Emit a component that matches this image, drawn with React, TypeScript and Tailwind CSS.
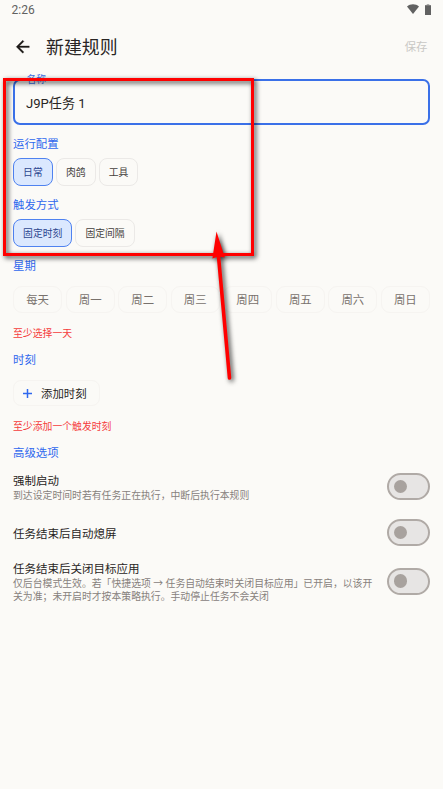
import React, { useState } from 'react';

interface ChipProps {
  label: string;
  selected?: boolean;
  onClick?: () => void;
}

interface SwitchRowProps {
  title: string;
  lines?: string[];
  className: string;
}

const profiles = ['日常', '肉鸽', '工具'];
const triggers = ['固定时刻', '固定间隔'];
const days = ['每天', '周一', '周二', '周三', '周四', '周五', '周六', '周日'];

const BackIcon: React.FC<{ className?: string }> = ({ className }) => (
  <svg className={className} viewBox="0 0 24 24" fill="currentColor" stroke="currentColor" strokeWidth="0.4">
    <path d="M20 11H7.83l5.59-5.59L12 4l-8 8 8 8 1.41-1.41L7.83 13H20v-2z" />
  </svg>
);

const WifiIcon: React.FC = () => (
  <svg className="h-[10px] w-[12px]" viewBox="0 0 12 10" fill="currentColor">
    <path d="M0 2.4C3.3-.6 8.7-.6 12 2.4L6 10z" />
  </svg>
);

const BatteryIcon: React.FC = () => (
  <svg className="h-[11px] w-[6px]" viewBox="0 0 6 11" fill="currentColor">
    <path d="M1.7 0h2.6v1.2H1.7z" opacity="0.5" />
    <path d="M0 1.2h6V11H0z" />
  </svg>
);

const Chip: React.FC<ChipProps> = ({ label, selected, onClick }) => (
  <button
    onClick={onClick}
    className={`h-[28.5px] rounded-[8px] border px-[9.1px] pt-[1.5px] text-[9.8px] leading-none whitespace-nowrap ${
      selected ? 'border-[#4f82f0] bg-[#dbe8fe] text-[#2b458f]' : 'border-[#ebe9e7] text-[#44403c]'
    }`}
  >
    {label}
  </button>
);

const SectionTitle: React.FC<{ children: React.ReactNode }> = ({ children }) => (
  <h2 className="h-4 text-[11.4px] leading-[17px] text-[#2f68ee]">{children}</h2>
);

const ErrorText: React.FC<{ children: React.ReactNode }> = ({ children }) => (
  <p className="h-3.5 text-[9.85px] leading-[16px] text-[#f53d3d]">{children}</p>
);

const SwitchRow: React.FC<SwitchRowProps> = ({ title, lines = [], className }) => {
  const [on, setOn] = useState(false);
  return (
    <div className={`flex items-center justify-between ${className}`}>
      <div className="pt-[2px]">
        <h3 className="text-[11.5px] leading-[16px] text-[#292524]">{title}</h3>
        {lines.map((line) => (
          <p key={line} className="text-[9.85px] leading-[13.2px] whitespace-nowrap text-[#87817c]">
            {line}
          </p>
        ))}
      </div>
      <button
        role="switch"
        aria-checked={on}
        aria-label={title}
        onClick={() => setOn(!on)}
        className={`flex h-[27px] w-[43px] shrink-0 items-center rounded-full border-2 border-[#b0aaa6] bg-[#e7e5e4] px-[4.5px] ${
          on ? 'justify-end' : 'justify-start'
        }`}
      >
        <span className="size-[13.5px] rounded-full bg-[#a8a29e]" />
      </button>
    </div>
  );
};

// red frame and arrow drawn on top of the form
const Annotation: React.FC = () => (
  <div className="pointer-events-none absolute inset-0">
    <svg
      className="h-full w-full drop-shadow-[2px_2px_2.5px_rgba(0,0,0,0.8)]"
      viewBox="0 0 443 789"
      fill="#ff0000"
    >
      <rect x="4.5" y="79.5" width="248" height="175" fill="none" stroke="#ff0000" strokeWidth="3" />
      <path d="M216.5 231.5L224.8 257.6L218.5 256.5L212.4 258.6z" />
      <path d="M218.3 254L229.5 378" stroke="#ff0000" strokeWidth="3.6" strokeLinecap="round" />
    </svg>
  </div>
);

export default function App() {
  const [profile, setProfile] = useState('日常');
  const [trigger, setTrigger] = useState('固定时刻');
  const [name, setName] = useState('J9P任务 1');

  return (
    <div className="relative h-[789px] w-[443px] overflow-hidden bg-[#fbfaf7] font-['Roboto','Noto_Sans_CJK_SC',sans-serif]">
      <div className="flex h-5 items-center justify-between pr-3 pl-[11.5px] text-[#616161]">
        <span className="text-[12px] leading-5">2:26</span>
        <div className="flex items-center gap-[6px] pb-[2px]">
          <WifiIcon />
          <BatteryIcon />
        </div>
      </div>

      <header className="flex h-[53px] items-center pr-[15.5px] pl-[13px]">
        <BackIcon className="size-[19.5px] text-[#1c1917]" />
        <h1 className="ml-[13.5px] pt-[2px] text-[17.9px] leading-6 text-[#292524]">新建规则</h1>
        <button className="ml-auto pt-[2px] text-[11.4px] text-[#c9c8c5]">保存</button>
      </header>

      <main className="px-[13px] pt-[6px]">
        <div className="relative">
          <input
            value={name}
            onChange={(e) => setName(e.target.value)}
            className="block h-[46px] w-full rounded-[7px] border-2 border-[#3a70e8] px-[11px] text-[13.1px] text-[#292524] outline-none"
          />
          <label className="absolute -top-[7px] left-[10px] bg-[#fbfaf7] px-[3.5px] text-[9.7px] leading-[15px] text-[#3b6fe8]">
            名称
          </label>
        </div>

        <div className="mt-[11px]">
          <SectionTitle>运行配置</SectionTitle>
        </div>
        <div className="mt-[5.5px] flex gap-[3px]">
          {profiles.map((p) => (
            <Chip key={p} label={p} selected={p === profile} onClick={() => setProfile(p)} />
          ))}
        </div>

        <div className="mt-[11px]">
          <SectionTitle>触发方式</SectionTitle>
        </div>
        <div className="mt-[5.5px] flex gap-[3px]">
          {triggers.map((t) => (
            <Chip key={t} label={t} selected={t === trigger} onClick={() => setTrigger(t)} />
          ))}
        </div>

        <div className="mt-[11px]">
          <SectionTitle>星期</SectionTitle>
        </div>
        <div className="mt-3 grid grid-cols-8 gap-[3.3px]">
          {days.map((day) => (
            <button
              key={day}
              className="h-[27px] rounded-[9px] border border-[#f6f4f1] pt-[2px] text-[11.4px] leading-none text-[#78716c]"
            >
              {day}
            </button>
          ))}
        </div>
        <div className="mt-[13px]">
          <ErrorText>至少选择一天</ErrorText>
        </div>

        <div className="mt-[11.5px]">
          <SectionTitle>时刻</SectionTitle>
        </div>
        <button className="mt-[12.5px] flex h-[26px] w-[87px] items-center rounded-[8px] border border-[#f6f4f1] pl-[8.5px] text-[11.4px] text-[#292524]">
          <svg className="size-[9px] text-[#2f68ee]" viewBox="0 0 9 9" stroke="currentColor" strokeWidth="1.5">
            <path d="M4.5 0v9M0 4.5h9" />
          </svg>
          <span className="ml-[9.5px] pt-[3px] whitespace-nowrap">添加时刻</span>
        </button>
        <div className="mt-[13px]">
          <ErrorText>至少添加一个触发时刻</ErrorText>
        </div>

        <div className="mt-[11.5px]">
          <SectionTitle>高级选项</SectionTitle>
        </div>
        <SwitchRow className="mt-[11px] h-[30px]" title="强制启动" lines={['到达设定时间时若有任务正在执行，中断后执行本规则']} />
        <SwitchRow className="mt-[17px] h-[28px]" title="任务结束后自动熄屏" />
        <SwitchRow
          className="mt-[13px] h-[43px]"
          title="任务结束后关闭目标应用"
          lines={[
            '仅后台模式生效。若「快捷选项 → 任务自动结束时关闭目标应用」已开启，以该开',
            '关为准；未开启时才按本策略执行。手动停止任务不会关闭',
          ]}
        />
      </main>

      <Annotation />
    </div>
  );
}
